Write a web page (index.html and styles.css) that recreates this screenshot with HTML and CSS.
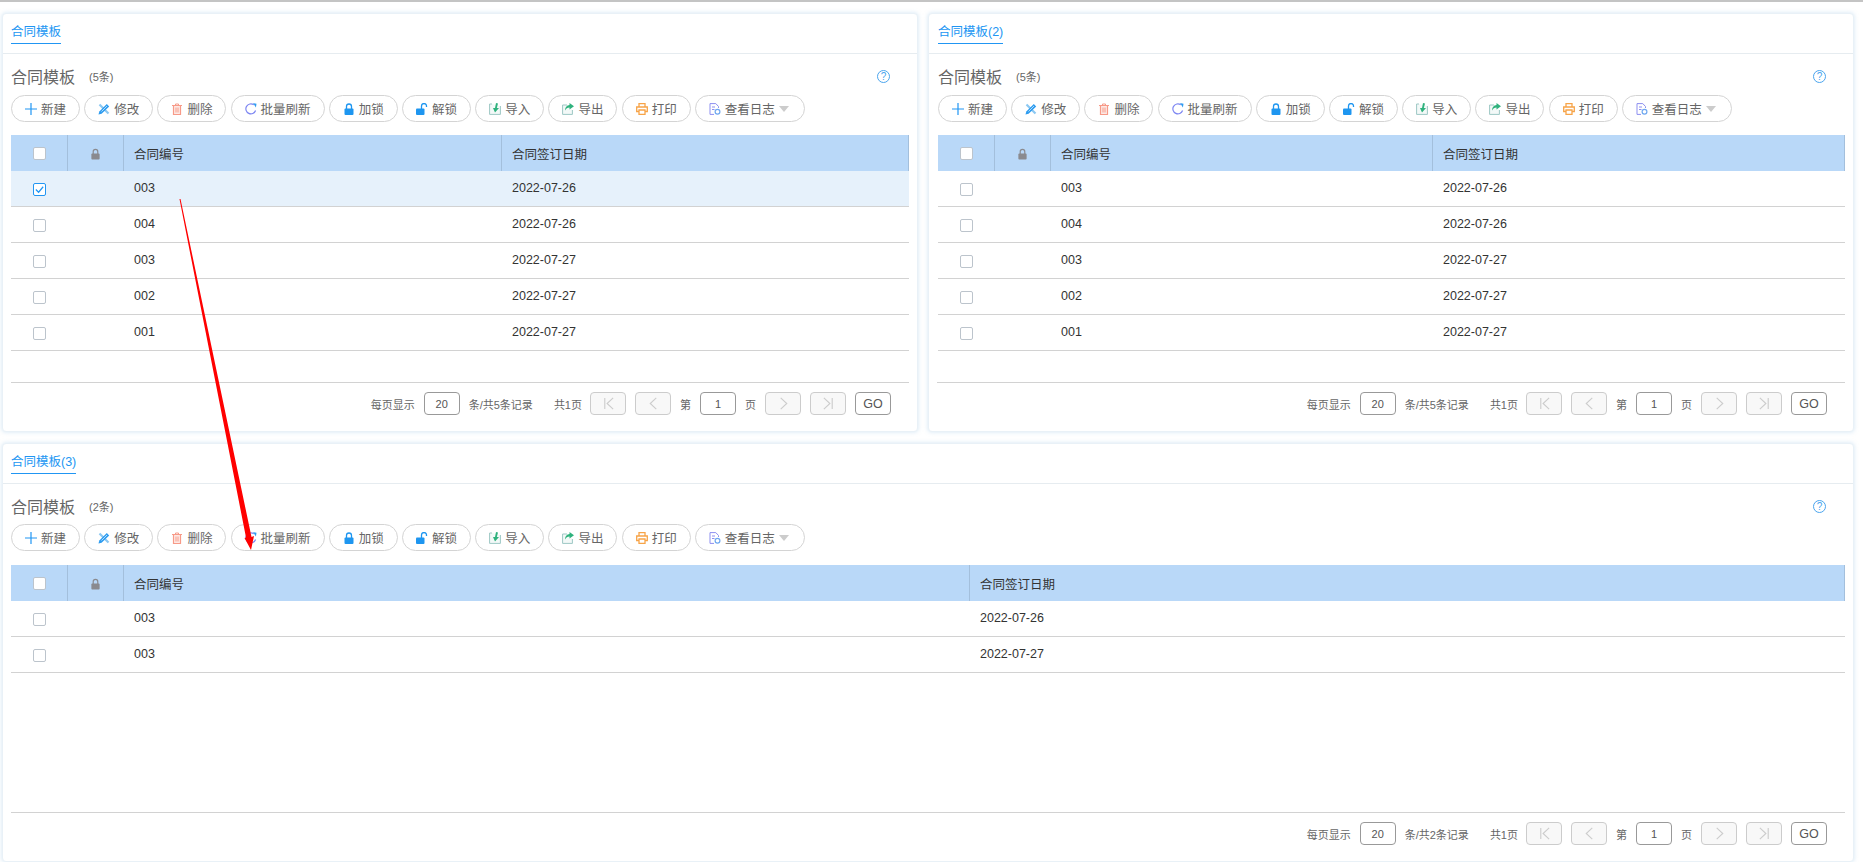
FILE: index.html
```html
<!DOCTYPE html>
<html lang="zh-CN">
<head>
    <meta charset="UTF-8">
    <title>合同模板</title>
    <link rel="stylesheet" href="styles.css">
</head>
<body>
    <!-- shared icons -->
    <svg class="icon-defs" width="0" height="0">
        <symbol id="i-plus" viewBox="0 0 12 12"><path d="M6 0v12M0 6h12" stroke="#2196f3" stroke-width="1.2" fill="none"/></symbol>
        <symbol id="i-edit" viewBox="0 0 12 12"><path d="M1.5 1.5l9 9" stroke="#8cc8f2" stroke-width="2.2" fill="none"/><path d="M.5 11.5l.8-3L8.8 1l2.4 2.4-7.6 7.400z" fill="#2d9cf0"/><path d="M3.5 8.5L9 3" stroke="#d5ecfb" stroke-width=".8" fill="none"/></symbol>
        <symbol id="i-trash" viewBox="0 0 12 12"><path d="M1 2.5h10M4.5 2.5V1h3v1.500" stroke="#f79a88" stroke-width="1" fill="none"/><path d="M2.500 3v8.500h7V3" stroke="#f79a88" stroke-width="1.2" fill="#fde9e5"/><path d="M5 4.500v5M7 4.500v5" stroke="#f79a88" stroke-width="1" fill="none"/></symbol>
        <symbol id="i-refresh" viewBox="0 0 12 12"><path d="M10.6 7.500A5 5 0 1 1 8.800 1.800" stroke="#7d86f2" stroke-width="1.2" fill="none"/><path d="M8 0l3.500 .8-.6 3.700z" fill="#2f9cf0"/></symbol>
        <symbol id="i-lock" viewBox="0 0 12 12"><path d="M3.500 6V3.500a2.500 2.500 0 0 1 5 0V6" stroke="currentColor" stroke-width="1.3" fill="none"/><rect x="1.500" y="5.500" width="9" height="6.500" rx="1" fill="currentColor"/></symbol>
        <symbol id="i-unlock" viewBox="0 0 12 12"><path d="M5.500 6V3a2.500 2.500 0 0 1 5 0v1" stroke="#1e96f0" stroke-width="1.3" fill="none"/><rect x="0" y="5.500" width="8.500" height="6.500" rx="1" fill="#1e96f0"/></symbol>
        <symbol id="i-import" viewBox="0 0 12 12"><path d="M3 1H.6v10.400h10.800V3" stroke="#9cc7c4" stroke-width="1" fill="#f3f9f8"/><path d="M7 0l2 .5L7.800 5H10L6 9.500 4 5h2z" fill="#2fb27d"/></symbol>
        <symbol id="i-export" viewBox="0 0 12 12"><path d="M5 2H.6v9.400h9.800V7" stroke="#9cc7c4" stroke-width="1" fill="#f3f9f8"/><path d="M7.500 0L12 3.200 7.500 6.500V4.500C5.500 4.500 4 5.500 3 7.500 3 4.500 5 2.200 7.500 2z" fill="#2fb27d"/></symbol>
        <symbol id="i-print" viewBox="0 0 12 12"><path d="M3 4V.7h6V4M3 8.500H.7V4h10.600v4.500H9M3 7h6v4.300H3z" stroke="#f7a448" stroke-width="1.3" fill="none"/></symbol>
        <symbol id="i-log" viewBox="0 0 12 12"><path d="M9.500 5V3.500L6.800 .6H1v10.800h4" stroke="#8d8ff0" stroke-width="1" fill="none"/><path d="M3 4h3M3 6.500h2.500" stroke="#8d8ff0" stroke-width="1" fill="none"/><circle cx="8.500" cy="8.800" r="2.400" stroke="#6fa8f0" stroke-width="1.2" fill="none"/></symbol>
        <symbol id="i-first" viewBox="0 0 14 14"><path d="M3 1v12M12 1L5.500 7l6.500 6" stroke="#ccc" stroke-width="1.2" fill="none"/></symbol>
        <symbol id="i-prev" viewBox="0 0 14 14"><path d="M10 1L3.500 7l6.500 6" stroke="#ccc" stroke-width="1.2" fill="none"/></symbol>
        <symbol id="i-next" viewBox="0 0 14 14"><path d="M4 1l6.500 6L4 13" stroke="#ccc" stroke-width="1.2" fill="none"/></symbol>
        <symbol id="i-last" viewBox="0 0 14 14"><path d="M2 1l6.500 6L2 13M11 1v12" stroke="#ccc" stroke-width="1.2" fill="none"/></symbol>
    </svg>

    <div class="topline"></div>

    <div class="page">
        <section class="panel panel-one">
            <div class="tabs"><a class="tab">合同模板</a></div>
            <div class="title-row">
                <h2>合同模板</h2><span class="count">(5条)</span>
                <span class="help">?</span>
            </div>
            <div class="toolbar">
                <button class="btn"><svg><use href="#i-plus"/></svg>新建</button>
                <button class="btn"><svg><use href="#i-edit"/></svg>修改</button>
                <button class="btn"><svg><use href="#i-trash"/></svg>删除</button>
                <button class="btn"><svg><use href="#i-refresh"/></svg>批量刷新</button>
                <button class="btn blue"><svg><use href="#i-lock"/></svg>加锁</button>
                <button class="btn"><svg><use href="#i-unlock"/></svg>解锁</button>
                <button class="btn"><svg><use href="#i-import"/></svg>导入</button>
                <button class="btn"><svg><use href="#i-export"/></svg>导出</button>
                <button class="btn"><svg><use href="#i-print"/></svg>打印</button>
                <button class="btn"><svg><use href="#i-log"/></svg>查看日志<i class="caret"></i></button>
            </div>
            <table class="grid">
                <thead>
                    <tr>
                        <th class="col-check"><span class="check"></span></th>
                        <th class="col-lock"><svg class="lock-head"><use href="#i-lock"/></svg></th>
                        <th class="col-no">合同编号</th>
                        <th>合同签订日期</th>
                    </tr>
                </thead>
                <tbody>
                    <tr class="selected"><td class="center"><span class="check checked"><svg viewBox="0 0 12 12"><path d="M2 6l3 3 5-6" stroke="#2196f3" stroke-width="1.3" fill="none"/></svg></span></td><td></td><td>003</td><td>2022-07-26</td></tr>
                    <tr><td class="center"><span class="check"></span></td><td></td><td>004</td><td>2022-07-26</td></tr>
                    <tr><td class="center"><span class="check"></span></td><td></td><td>003</td><td>2022-07-27</td></tr>
                    <tr><td class="center"><span class="check"></span></td><td></td><td>002</td><td>2022-07-27</td></tr>
                    <tr><td class="center"><span class="check"></span></td><td></td><td>001</td><td>2022-07-27</td></tr>
                </tbody>
            </table>
            <div class="pager">
                <span class="label">每页显示</span><span class="box">20</span><span class="label summary">条/共5条记录</span><span class="label pages">共1页</span>
                <span class="box off"><svg><use href="#i-first"/></svg></span><span class="box off"><svg><use href="#i-prev"/></svg></span>
                <span class="label">第</span><span class="box">1</span><span class="label">页</span>
                <span class="box off"><svg><use href="#i-next"/></svg></span><span class="box off"><svg><use href="#i-last"/></svg></span>
                <span class="box go">GO</span>
            </div>
        </section>

        <section class="panel panel-two">
            <div class="tabs"><a class="tab">合同模板(2)</a></div>
            <div class="title-row">
                <h2>合同模板</h2><span class="count">(5条)</span>
                <span class="help">?</span>
            </div>
            <div class="toolbar">
                <button class="btn"><svg><use href="#i-plus"/></svg>新建</button>
                <button class="btn"><svg><use href="#i-edit"/></svg>修改</button>
                <button class="btn"><svg><use href="#i-trash"/></svg>删除</button>
                <button class="btn"><svg><use href="#i-refresh"/></svg>批量刷新</button>
                <button class="btn blue"><svg><use href="#i-lock"/></svg>加锁</button>
                <button class="btn"><svg><use href="#i-unlock"/></svg>解锁</button>
                <button class="btn"><svg><use href="#i-import"/></svg>导入</button>
                <button class="btn"><svg><use href="#i-export"/></svg>导出</button>
                <button class="btn"><svg><use href="#i-print"/></svg>打印</button>
                <button class="btn"><svg><use href="#i-log"/></svg>查看日志<i class="caret"></i></button>
            </div>
            <table class="grid">
                <thead>
                    <tr>
                        <th class="col-check"><span class="check"></span></th>
                        <th class="col-lock"><svg class="lock-head"><use href="#i-lock"/></svg></th>
                        <th class="col-no">合同编号</th>
                        <th>合同签订日期</th>
                    </tr>
                </thead>
                <tbody>
                    <tr><td class="center"><span class="check"></span></td><td></td><td>003</td><td>2022-07-26</td></tr>
                    <tr><td class="center"><span class="check"></span></td><td></td><td>004</td><td>2022-07-26</td></tr>
                    <tr><td class="center"><span class="check"></span></td><td></td><td>003</td><td>2022-07-27</td></tr>
                    <tr><td class="center"><span class="check"></span></td><td></td><td>002</td><td>2022-07-27</td></tr>
                    <tr><td class="center"><span class="check"></span></td><td></td><td>001</td><td>2022-07-27</td></tr>
                </tbody>
            </table>
            <div class="pager">
                <span class="label">每页显示</span><span class="box">20</span><span class="label summary">条/共5条记录</span><span class="label pages">共1页</span>
                <span class="box off"><svg><use href="#i-first"/></svg></span><span class="box off"><svg><use href="#i-prev"/></svg></span>
                <span class="label">第</span><span class="box">1</span><span class="label">页</span>
                <span class="box off"><svg><use href="#i-next"/></svg></span><span class="box off"><svg><use href="#i-last"/></svg></span>
                <span class="box go">GO</span>
            </div>
        </section>

        <section class="panel panel-three">
            <div class="tabs"><a class="tab">合同模板(3)</a></div>
            <div class="title-row">
                <h2>合同模板</h2><span class="count">(2条)</span>
                <span class="help">?</span>
            </div>
            <div class="toolbar">
                <button class="btn"><svg><use href="#i-plus"/></svg>新建</button>
                <button class="btn"><svg><use href="#i-edit"/></svg>修改</button>
                <button class="btn"><svg><use href="#i-trash"/></svg>删除</button>
                <button class="btn"><svg><use href="#i-refresh"/></svg>批量刷新</button>
                <button class="btn blue"><svg><use href="#i-lock"/></svg>加锁</button>
                <button class="btn"><svg><use href="#i-unlock"/></svg>解锁</button>
                <button class="btn"><svg><use href="#i-import"/></svg>导入</button>
                <button class="btn"><svg><use href="#i-export"/></svg>导出</button>
                <button class="btn"><svg><use href="#i-print"/></svg>打印</button>
                <button class="btn"><svg><use href="#i-log"/></svg>查看日志<i class="caret"></i></button>
            </div>
            <table class="grid">
                <thead>
                    <tr>
                        <th class="col-check"><span class="check"></span></th>
                        <th class="col-lock"><svg class="lock-head"><use href="#i-lock"/></svg></th>
                        <th class="col-no">合同编号</th>
                        <th>合同签订日期</th>
                    </tr>
                </thead>
                <tbody>
                    <tr><td class="center"><span class="check"></span></td><td></td><td>003</td><td>2022-07-26</td></tr>
                    <tr><td class="center"><span class="check"></span></td><td></td><td>003</td><td>2022-07-27</td></tr>
                </tbody>
            </table>
            <div class="pager">
                <span class="label">每页显示</span><span class="box">20</span><span class="label summary">条/共2条记录</span><span class="label pages">共1页</span>
                <span class="box off"><svg><use href="#i-first"/></svg></span><span class="box off"><svg><use href="#i-prev"/></svg></span>
                <span class="label">第</span><span class="box">1</span><span class="label">页</span>
                <span class="box off"><svg><use href="#i-next"/></svg></span><span class="box off"><svg><use href="#i-last"/></svg></span>
                <span class="box go">GO</span>
            </div>
        </section>
    </div>

    <!-- red annotation arrow drawn over the panels -->
    <svg class="arrow" width="1863" height="867">
        <polygon points="180.5,199 251.5,537 254,536 251,550 244.5,538 246,537.5 179.5,199" fill="#f00"/>
    </svg>
</body>
</html>
```

FILE: styles.css
```css
* {
    box-sizing: border-box;
}

body {
    margin: 0;
    background-color: #fff;
    color: #333;
    font-family: "Liberation Sans", "Noto Sans CJK SC", sans-serif;
    font-size: 12.5px;
    overflow: hidden;
}

.icon-defs {
    position: absolute;
}

.topline {
    height: 3px;
    background-color: #fff;
    border-top: 2px solid #c4c4c4;
}

.page {
    display: grid;
    grid-template-columns: 916px 926px;
    grid-template-rows: 419px 419px;
    column-gap: 10px;
    row-gap: 11px;
    padding: 10px 0 0 2px;
}

.panel {
    display: flex;
    flex-direction: column;
    background-color: #fff;
    border: 1px solid #e9f1f7;
    border-radius: 4px;
    box-shadow: 0 0 4px rgba(170, 205, 235, 0.5);
}

.panel-three {
    grid-column: span 2;
}

.panel-two .tabs,
.panel-two .title-row,
.panel-two .toolbar {
    padding-left: 9px;
}

.tabs {
    height: 40px;
    padding: 7px 0 0 8px;
    border-bottom: 1px solid #e6ecf0;
}

.tab {
    display: inline-block;
    height: 23px;
    line-height: 22px;
    color: #2196f3;
    border-bottom: 1px solid #2196f3;
}

.title-row {
    display: flex;
    align-items: center;
    height: 28px;
    margin-top: 8px;
    padding: 0 27px 0 8px;
}

.title-row h2 {
    margin: 0;
    font-size: 16px;
    font-weight: normal;
    color: #666;
}

.count {
    margin-left: 14px;
    font-size: 11px;
    color: #666;
}

.help {
    width: 13px;
    height: 13px;
    margin-left: auto;
    border: 1px solid #4aa5ee;
    border-radius: 50%;
    color: #4aa5ee;
    font-size: 10px;
    line-height: 11px;
    text-align: center;
}

.toolbar {
    display: flex;
    gap: 4.2px;
    margin-top: 5px;
    padding-left: 8px;
}

.panel-three .toolbar {
    margin-top: 4px;
    margin-bottom: 1px;
}

.btn {
    display: flex;
    align-items: center;
    height: 27px;
    padding: 0 13px;
    background-color: #fff;
    border: 1px solid #d4d4d4;
    border-radius: 14px;
    color: #666;
    font-family: inherit;
    font-size: 12.5px;
    white-space: nowrap;
}

.btn svg {
    width: 12px;
    height: 12px;
    margin-right: 4px;
}

.btn.blue svg {
    color: #1e96f0;
}

.caret {
    width: 0;
    height: 0;
    margin-left: 4px;
    margin-right: 2px;
    border-left: 5px solid transparent;
    border-right: 5px solid transparent;
    border-top: 6px solid #ccc;
}

.grid {
    margin: 13px 0 0 8px;
    border-collapse: separate;
    border-spacing: 0;
    table-layout: fixed;
}

.panel-one .grid {
    width: 898px;
}

.panel-two .grid {
    width: 907px;
    margin-left: 9px;
}

.panel-three .grid {
    width: 1834px;
}

.grid th {
    height: 36px;
    padding: 0 0 0 10px;
    background-color: #b9d8f8;
    border-right: 1px solid #a3bfdc;
    font-weight: normal;
    text-align: left;
}

.grid th.col-check,
.grid th.col-lock {
    padding: 0;
    text-align: center;
}

.col-check {
    width: 57px;
}

.col-lock {
    width: 56px;
}

.panel-one .col-no {
    width: 378px;
}

.panel-two .col-no {
    width: 382px;
}

.panel-three .col-no {
    width: 846px;
}

.lock-head {
    width: 11px;
    height: 12px;
    color: #8a8a8f;
    vertical-align: middle;
}

.grid td {
    height: 36px;
    padding: 0 0 1px 10px;
    border-bottom: 1px solid #d2d2d2;
}

.grid td.center {
    padding: 1px 0 0;
    text-align: center;
}

.grid tr.selected td {
    background-color: #e6f1fb;
}

.check {
    display: inline-block;
    width: 13px;
    height: 13px;
    background-color: #fff;
    border: 1px solid #bcc4cc;
    border-radius: 2px;
    vertical-align: middle;
}

.check svg {
    display: block;
    width: 11px;
    height: 11px;
}

.check.checked {
    border-color: #2196f3;
}

.pager {
    display: flex;
    align-items: center;
    justify-content: flex-end;
    gap: 9px;
    margin: auto 8px 0;
    padding: 9px 18px 16px 0;
    border-top: 1px solid #d2d2d2;
}

.label {
    font-size: 11px;
    color: #666;
}

.summary {
    margin-right: 12px;
}

.pages {
    margin-right: -1px;
}

.box {
    display: flex;
    align-items: center;
    justify-content: center;
    width: 36px;
    height: 23px;
    border: 1px solid #999;
    border-radius: 4px;
    font-size: 11px;
    color: #555;
}

.box.off {
    background-color: #f8f8f8;
    border-color: #ccc;
}

.box svg {
    width: 13px;
    height: 13px;
}

.box.go {
    font-size: 12.5px;
}

.arrow {
    position: absolute;
    left: 0;
    top: 0;
    pointer-events: none;
}
```
